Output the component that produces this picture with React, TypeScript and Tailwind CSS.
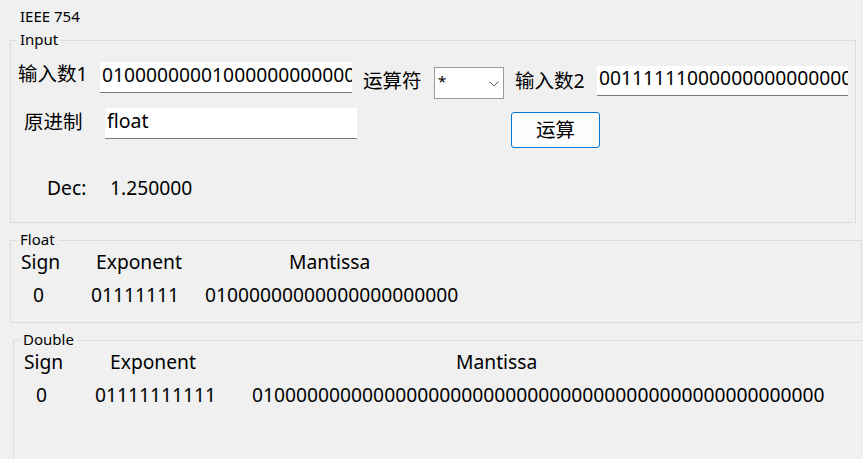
import React from "react";

const FONT = "font-['Noto_Sans','Noto_Sans_CJK_SC',sans-serif]";

function Legend({ children }: { children: React.ReactNode }) {
  return (
    <legend className="px-[3px] pb-[2px] text-[15px] leading-[20px] text-black">
      {children}
    </legend>
  );
}

export default function App() {
  const in1 = "01000000001000000000000000000000";
  const in2 = "00111111000000000000000000000000";
  return (
    <div className={`${FONT} w-[863px] h-[459px] overflow-hidden bg-[#f0f0f0] text-black`}>
      <div className="pl-[20px] pt-[6px] text-[15px] leading-[20px]">IEEE 754</div>

      {/* Input group */}
      <fieldset className="ml-[10px] mt-[3px] w-[846px] h-[194px] border border-[#dcdcdc] px-[6px] pt-0 pb-0 m-0">
        <Legend>Input</Legend>
        <div className="flex flex-col text-[19.5px]">
          {/* row 1 */}
          <div className="flex items-start h-[48px]">
            <div className="ml-[1px] mt-[10px] w-[82px] leading-[26px] whitespace-nowrap">输入数1</div>
            <div className="mt-[11px] w-[252px] h-[31px] bg-white border-b border-[#7a7a7a] pl-[2px] leading-[26px] whitespace-nowrap overflow-hidden text-[19.25px]">
              {in1}
            </div>
            <div className="ml-[11px] mt-[17px] w-[68px] mr-[3px] leading-[26px] whitespace-nowrap">运算符</div>
            <div className="mt-[16px] w-[70px] h-[32px] bg-white border border-[#9a9a9a] flex items-start justify-between pl-[3px] pr-[4px]">
              <span className="pt-[3px] text-[15px] leading-[20px]">*</span>
              <svg width="10" height="6" viewBox="0 0 10 6" className="mt-[13px]">
                <path d="M0.5 0.5 L5 5 L9.5 0.5" fill="none" stroke="#606060" strokeWidth="1" />
              </svg>
            </div>
            <div className="ml-[11px] mt-[17px] w-[82px] leading-[26px] whitespace-nowrap">输入数2</div>
            <div className="mt-[15px] w-[251px] h-[30px] bg-white border-b border-[#7a7a7a] pl-[2px] leading-[24px] whitespace-nowrap overflow-hidden text-[19.25px]">
              {in2}
            </div>
          </div>
          {/* row 2 */}
          <div className="flex items-start h-[49px]">
            <div className="ml-[7px] mt-[10px] w-[81px] leading-[26px] whitespace-nowrap">原进制</div>
            <div className="mt-[9px] w-[252px] h-[31px] bg-white border-b border-[#7a7a7a] pl-[2px] leading-[26px] whitespace-nowrap overflow-hidden">
              float
            </div>
            <button className="ml-[154px] mt-[13px] w-[89px] h-[36px] bg-[#fdfdfd] border border-[#0078d7] rounded-[3px] flex items-center justify-center leading-[26px] text-[19.5px] text-black">
              运算
            </button>
          </div>
          {/* row 3 */}
          <div className="flex items-start mt-[27px] text-[19.25px]">
            <div className="ml-[30px] w-[63px] leading-[26px]">Dec:</div>
            <div className="leading-[26px]">1.250000</div>
          </div>
        </div>
      </fieldset>

      {/* Float group */}
      <fieldset className="ml-[10px] mt-[6px] w-[852px] h-[94px] border border-[#dcdcdc] px-[6px] pt-0 pb-0 m-0">
        <Legend>Float</Legend>
        <div className="flex flex-col text-[19.25px] leading-[20px]">
          <div className="flex mt-[1px] h-[20px] whitespace-nowrap">
            <div className="ml-[4px] w-[75px]">Sign</div>
            <div className="w-[193px]">Exponent</div>
            <div>Mantissa</div>
          </div>
          <div className="flex mt-[13px] h-[20px] whitespace-nowrap">
            <div className="ml-[16px] w-[58px]">0</div>
            <div className="w-[114px]">01111111</div>
            <div>01000000000000000000000</div>
          </div>
        </div>
      </fieldset>

      {/* Double group */}
      <fieldset className="ml-[13px] mt-[6px] w-[900px] h-[200px] border border-[#dcdcdc] px-[6px] pt-0 pb-0 m-0">
        <Legend>Double</Legend>
        <div className="flex flex-col text-[19.25px] leading-[20px]">
          <div className="flex mt-[1px] h-[20px] whitespace-nowrap">
            <div className="ml-[4px] w-[86px]">Sign</div>
            <div className="w-[346px]">Exponent</div>
            <div>Mantissa</div>
          </div>
          <div className="flex mt-[13px] h-[20px] whitespace-nowrap">
            <div className="ml-[16px] w-[59px]">0</div>
            <div className="w-[157px]">01111111111</div>
            <div>0100000000000000000000000000000000000000000000000000</div>
          </div>
        </div>
      </fieldset>
    </div>
  );
}
